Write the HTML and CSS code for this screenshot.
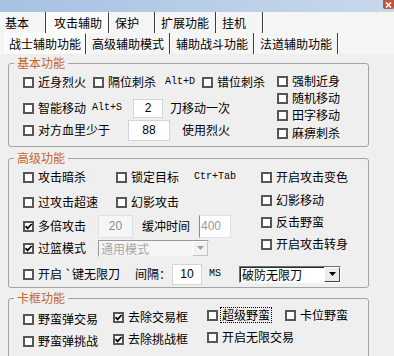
FILE: index.html
```html
<!doctype html>
<html lang="zh-CN">
  <head>
    <meta charset="utf-8">
    <title>攻击辅助</title>
    <link rel="stylesheet" href="styles.css">
  </head>
  <body>

    <!-- window caption, cut off at the top -->
    <div class="titlebar">
      <span class="close">
        <svg viewBox="0 0 7 6" width="7" height="6"><path d="M1 0.5 L6 5.5 M6 0.5 L1 5.5" stroke="#fff" stroke-width="1.6"/></svg>
      </span>
    </div>

    <div class="tabs main">
      <span class="tab first w44">基本</span>
      <span class="tab sel w63">攻击辅助</span>
      <span class="tab w46">保护</span>
      <span class="tab w61">扩展功能</span>
      <span class="tab w47">挂机</span>
    </div>
    <div class="tabs sub">
      <span class="tab sel w82">战士辅助功能</span>
      <span class="tab w84">高级辅助模式</span>
      <span class="tab w84">辅助战斗功能</span>
      <span class="tab w84">法道辅助功能</span>
    </div>

    <!-- 基本功能 -->
    <fieldset class="group g-basic">
      <legend>基本功能</legend>
      <div class="inner split">
        <div class="left">
          <div class="row ra">
            <label class="ck"><span class="cb"></span>近身烈火</label>
            <label class="ck"><span class="cb"></span>隔位刺杀</label>
            <span class="hot hot-d">Alt+D</span>
            <label class="ck"><span class="cb"></span>错位刺杀</label>
          </div>
          <div class="row rb">
            <label class="ck"><span class="cb"></span>智能移动</label>
            <span class="hot hot-s">Alt+S</span>
            <input class="num n-knife" type="text" value="2" readonly>
            <span class="txt t-knife">刀移动一次</span>
          </div>
          <div class="row rc">
            <label class="ck"><span class="cb"></span>对方血里少于</label>
            <input class="num n-hp" type="text" value="88" readonly>
            <span class="txt t-hp">使用烈火</span>
          </div>
        </div>
        <div class="right">
          <label class="ck"><span class="cb"></span>强制近身</label>
          <label class="ck"><span class="cb"></span>随机移动</label>
          <label class="ck"><span class="cb"></span>田字移动</label>
          <label class="ck"><span class="cb"></span>麻痹刺杀</label>
        </div>
      </div>
    </fieldset>

    <!-- 高级功能 -->
    <fieldset class="group g-adv">
      <legend>高级功能</legend>
      <div class="inner">
        <div class="split">
          <div class="left">
            <div class="row ra">
              <label class="ck w93"><span class="cb"></span>攻击暗杀</label>
              <label class="ck"><span class="cb"></span>锁定目标</label>
              <span class="hot hot-tab">Ctr+Tab</span>
            </div>
            <div class="row rb">
              <label class="ck w93"><span class="cb"></span>过攻击超速</label>
              <label class="ck"><span class="cb"></span>幻影攻击</label>
            </div>
            <div class="row rc">
              <label class="ck w75"><span class="cb on"><svg viewBox="0 0 7 7" width="7" height="7"><path d="M0.5 3.2 L2.6 5.4 L6.6 1" fill="none" stroke="#000" stroke-width="1.7"/></svg></span>多倍攻击</label>
              <input class="num n-times" type="text" value="20" disabled>
              <span class="txt t-buf">缓冲时间</span>
              <input class="num n-buf" type="text" value="400" disabled>
            </div>
            <div class="row rd">
              <label class="ck w75"><span class="cb on"><svg viewBox="0 0 7 7" width="7" height="7"><path d="M0.5 3.2 L2.6 5.4 L6.6 1" fill="none" stroke="#000" stroke-width="1.7"/></svg></span>过篮模式</label>
              <div class="combo off c-mode">
                <span class="value">通用模式</span>
                <span class="btn"><svg viewBox="0 0 7 4" width="7" height="4"><path d="M0 0 H7 L3.5 4 Z" fill="#a0a0a0"/></svg></span>
              </div>
            </div>
          </div>
          <div class="right">
            <label class="ck"><span class="cb"></span>开启攻击变色</label>
            <label class="ck"><span class="cb"></span>幻影移动</label>
            <label class="ck"><span class="cb"></span>反击野蛮</label>
            <label class="ck"><span class="cb"></span>开启攻击转身</label>
          </div>
        </div>
        <div class="row re">
          <label class="ck"><span class="cb"></span>开启 `键无限刀</label>
          <span class="txt t-gap">间隔：</span>
          <input class="num n-gap" type="text" value="10" readonly>
          <span class="hot hot-ms">MS</span>
          <div class="combo c-blade">
            <span class="value">破防无限刀</span>
            <span class="btn"><svg viewBox="0 0 7 4" width="7" height="4"><path d="M0 0 H7 L3.5 4 Z" fill="#000"/></svg></span>
          </div>
        </div>
      </div>
    </fieldset>

    <!-- 卡框功能 -->
    <fieldset class="group g-frame">
      <legend>卡框功能</legend>
      <div class="inner cols">
        <div class="col col-1">
          <label class="ck"><span class="cb"></span>野蛮弹交易</label>
          <label class="ck"><span class="cb"></span>野蛮弹挑战</label>
        </div>
        <div class="col col-2">
          <label class="ck"><span class="cb on"><svg viewBox="0 0 7 7" width="7" height="7"><path d="M0.5 3.2 L2.6 5.4 L6.6 1" fill="none" stroke="#000" stroke-width="1.7"/></svg></span>去除交易框</label>
          <label class="ck"><span class="cb on"><svg viewBox="0 0 7 7" width="7" height="7"><path d="M0.5 3.2 L2.6 5.4 L6.6 1" fill="none" stroke="#000" stroke-width="1.7"/></svg></span>去除挑战框</label>
        </div>
        <div class="col col-3">
          <label class="ck"><span class="cb"></span><span class="focus">超级野蛮</span></label>
          <label class="ck"><span class="cb"></span>开启无限交易</label>
        </div>
        <div class="col col-4">
          <label class="ck"><span class="cb"></span>卡位野蛮</label>
        </div>
      </div>
    </fieldset>

  </body>
</html>
```

FILE: styles.css
```css
* {
  box-sizing: border-box;
}

body {
  margin: 0;
  width: 394px;
  height: 356px;
  overflow: hidden;
  background: #f0eff0;
  color: #000;
  font: 12px/14px "Noto Sans CJK SC", "Noto Sans CJK JP", sans-serif;
}

/* Caption strip */
.titlebar {
  height: 12px;
  display: flex;
  justify-content: flex-end;
  background: linear-gradient(to right, #a6c1e2, #c9d8ec);
}
.close {
  width: 11px;
  height: 9px;
  display: flex;
  align-items: center;
  justify-content: center;
  background: #c4533c;
  border-radius: 0 0 2px 2px;
}

/* Tab rows */
.tabs {
  display: flex;
  height: 21px;
  background: #f6f5f6;
}
.tabs.main {
  padding-left: 2px;
}
.tabs.sub {
  padding-left: 4px;
}
.tab {
  display: flex;
  align-items: center;
  padding-left: 6px;
  white-space: nowrap;
  border-right: 1px solid #3c3c3c;
  box-shadow: 1px 0 0 #fff;
}
.tab.first {
  padding-left: 3px;
}
.tab.sel {
  padding-left: 7px;
  background: #fbfbfb;
  border-left: 1px solid #fff;
  border-top: 1px solid #fff;
}
.tabs.sub .tab.sel {
  padding-left: 4px;
}
.w44 { width: 44px; }
.w46 { width: 46px; }
.w47 { width: 47px; }
.w61 { width: 61px; }
.w63 { width: 63px; }
.w82 { width: 82px; }
.w84 { width: 84px; }

/* Group boxes */
.group {
  margin: 2px 0 0 8px;
  width: 361px;
  min-width: 0;
  padding: 4px 0 5px 5px;
  border: 1px solid #a3a3a3;
  border-radius: 3px;
}
.group legend {
  padding: 0 3px;
  color: #c4662a;
  line-height: 14px;
}
.g-adv {
  margin-top: 4px;
  padding-bottom: 2px;
}
.g-frame {
  margin-top: 3px;
  padding: 3px 0 10px 5px;
}
.inner {
  padding-left: 9px;
}

.split {
  display: flex;
}
.g-basic .left { width: 254px; }
.g-adv .left { width: 238px; }
.right {
  display: flex;
  flex-direction: column;
}

.row {
  display: flex;
  align-items: center;
  white-space: nowrap;
}

/* Checkbox + caption */
.ck {
  display: inline-flex;
  align-items: center;
  gap: 4px;
  height: 14px;
  line-height: 12px;
  white-space: nowrap;
}
.cb {
  flex: none;
  width: 11px;
  height: 11px;
  display: flex;
  align-items: center;
  justify-content: center;
  background: #fff;
  border: 2px solid #565656;
}
.w93 { width: 93px; }
.w75 { width: 75px; }

.hot {
  font: 10px/14px "Liberation Mono", "DejaVu Sans Mono", monospace;
}

.num {
  height: 19px;
  padding: 0;
  margin: 0;
  text-align: center;
  font: 12px "Liberation Sans", Arial, sans-serif;
  color: #000;
  background: #fff;
  border: 1px solid #d4d4d4;
  outline: none;
}
.num:disabled {
  color: #8c8c8c;
  background: #f6f6f6;
  border-color: #e0e0e0;
}

/* 基本功能 rows */
.g-basic .ra { height: 16px; gap: 7px; }
.g-basic .rb { height: 20px; margin-top: 8px; }
.g-basic .rc { height: 22px; margin-top: 1px; }
.hot-d { margin-left: 2px; }
.hot-s { margin-left: 6px; }
.n-knife { width: 30px; margin-left: 11px; }
.t-knife { margin-left: 7px; }
.n-hp { width: 42px; height: 21px; margin-left: 18px; }
.t-hp { margin-left: 12px; }
.g-basic .right .ck + .ck { margin-top: 3px; }
.g-basic .right .ck:nth-child(4) { margin-top: 4px; }

/* 高级功能 rows */
.g-adv .ra { height: 16px; }
.g-adv .rb { height: 16px; margin-top: 9px; }
.g-adv .rc { height: 24px; margin-top: 4px; }
.g-adv .rd { height: 18px; margin-top: 1px; }
.g-adv .re { height: 22px; margin-top: 6px; }
.g-adv .right { padding-top: 1px; }
.g-adv .right .ck + .ck { margin-top: 8px; }
.g-adv .right .ck:nth-child(2) { margin-top: 9px; }
.hot-tab { margin-left: 15px; }
.n-times { width: 35px; height: 23px; }
.t-buf { margin-left: 9px; }
.n-buf {
  width: 32px;
  height: 23px;
  margin-left: 9px;
  padding-left: 1px;
  text-align: left;
}
.g-adv .n-buf:disabled {
  color: #9a9a9a;
  background: #fff;
  border-left-color: #8a8a8a;
}
.t-gap { margin-left: 15px; }
.n-gap { width: 30px; height: 21px; margin-left: 1px; }
.hot-ms { margin-left: 7px; }

/* Drop-down boxes */
.combo {
  display: flex;
  align-items: stretch;
  height: 17px;
  background: #fff;
  border: 1px solid;
  border-color: #6e6e6e #fff #fff #6e6e6e;
  box-shadow: inset 1px 1px 0 #2a2a2a;
}
.combo .value {
  flex: 1;
  padding: 1px 0 0 2px;
  line-height: 14px;
  white-space: nowrap;
}
.combo .btn {
  width: 16px;
  display: flex;
  align-items: center;
  justify-content: center;
  background: #ebebeb;
  border: 1px solid;
  border-color: #fff #404040 #404040 #fff;
}
.c-blade { width: 102px; margin-left: 18px; }
.c-mode { width: 111px; }
.combo.off {
  background: #f5f5f5;
  border-color: #9a9a9a #f0f0f0 #f0f0f0 #9a9a9a;
  box-shadow: none;
}
.combo.off .value { color: #a8a8a8; }
.combo.off .btn {
  background: #f3f3f3;
  border-color: #fff #c4c4c4 #c4c4c4 #fff;
}

/* 卡框功能 columns */
.cols {
  display: flex;
}
.col {
  display: flex;
  flex-direction: column;
  gap: 8px;
}
.col-1 { width: 90px; margin-top: 4px; }
.col-2 { width: 94px; margin-top: 2px; }
.col-3 { width: 78px; }
.focus {
  outline: 1px dotted #000;
  outline-offset: 1px;
}
```
